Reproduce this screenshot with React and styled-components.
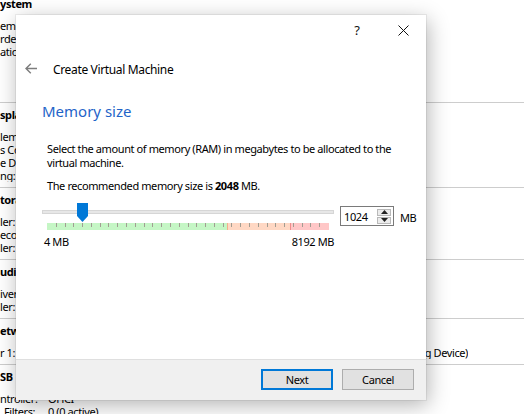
import React from "react";
import styled, { createGlobalStyle } from "styled-components";

const Global = createGlobalStyle`
  html, body { margin: 0; padding: 0; background: #ffffff; }
  body {
    width: 524px; height: 414px; overflow: hidden;
    font-family: "Segoe UI", "Noto Sans", sans-serif;
    font-size: 11px; letter-spacing: -0.4px; color: #000;
  }
`;

const Screen = styled.div`
  position: relative;
  width: 524px;
  height: 414px;
  overflow: hidden;
  background: #fff;
`;

/* ---------- background details pane ---------- */
const Details = styled.div`
  display: flex;
  flex-direction: column;
  margin-top: -9px;
`;

const Section = styled.section`
  border-top: 1px solid #cdcdcd;
  padding: 5px 0 ${(p) => 5 + (p.$extra || 0)}px;
`;

const SectionTitle = styled.div`
  font-weight: 700;
  line-height: 14px;
  white-space: nowrap;
  max-width: ${(p) => (p.$full ? 60 : 16)}px;
  overflow: hidden;
`;

const Rows = styled.div`
  margin-top: 8px;
  display: flex;
  flex-direction: column;
`;

const Row = styled.div`
  display: grid;
  grid-template-columns: 48px auto;
  height: 13px;
  line-height: 13px;
  white-space: nowrap;
`;

const Label = styled.span`
  padding-left: ${(p) => p.$indent || 0}px;
  max-width: ${(p) => (p.$full ? 48 : 16)}px;
  overflow: hidden;
`;

const Value = styled.span`
  ${(p) => (p.$width ? `width: ${p.$width}px; text-align: right; overflow: hidden;` : "")}
`;

const sections = [
  { title: "ystem", full: true, extra: 39, rows: [{ l: "emory:" }, { l: "rder:" }, { l: "ation:" }] },
  { title: "splay", rows: [{ l: "lemory:" }, { l: "s Controller:" }, { l: "e Desktop Server:" }, { l: "ng:" }] },
  { title: "torage", rows: [{ l: "ler:" }, { l: "econdary Master:" }, { l: "ler:" }] },
  { title: "udio", rows: [{ l: "iver:" }, { l: "ler:" }] },
  { title: "etwork", rows: [{ l: "r 1:", v: "Pointing Device)", w: 420 }] },
  { title: "SB", rows: [{ l: "ntroller:", v: "OHCI", full: true }, { l: "Filters:", v: "0 (0 active)", full: true, indent: 4 }] },
];

/* ---------- dialog ---------- */
const Dialog = styled.div`
  position: absolute;
  left: 16px;
  top: 15px;
  width: 410px;
  height: 385px;
  background: #fff;
  display: flex;
  flex-direction: column;
  box-shadow: 0 0 0 1px rgba(0, 0, 0, 0.06), 2px 5px 20px rgba(0, 0, 0, 0.3);
`;

const TitleBar = styled.div`
  height: 30px;
  display: flex;
  justify-content: flex-end;
`;

const CaptionButton = styled.div`
  width: 46px;
  height: 30px;
  display: flex;
  align-items: center;
  justify-content: center;
  font-size: 13px;
  letter-spacing: 0;
  color: #111;
`;

const Header = styled.div`
  height: 46px;
  display: flex;
  align-items: center;
  gap: 16px;
  padding-left: 9px;
`;

const HeaderText = styled.span`
  font-size: 12px;
  letter-spacing: -0.35px;
  padding-top: 3px;
`;

const Body = styled.div`
  padding: 10px 0 0 26px;
  display: flex;
  flex-direction: column;
`;

const PageTitle = styled.h1`
  margin: 0;
  font-weight: 400;
  font-size: 15px;
  letter-spacing: 0;
  line-height: 20px;
  color: #1f64c8;
`;

const Text = styled.p`
  margin: ${(p) => p.$top || 0}px 0 0 5px;
  line-height: 14px;
  width: 360px;
`;

const SliderBlock = styled.div`
  margin-top: 9px;
  display: flex;
  align-items: flex-start;
`;

const SliderColumn = styled.div`
  width: 292px;
  display: flex;
  flex-direction: column;
`;

const Track = styled.div`
  position: relative;
  height: 21px;
`;

const Groove = styled.div`
  margin-top: 8px;
  height: 4px;
  box-sizing: border-box;
  background: #e7e7e7;
  border: 1px solid #d6d6d6;
`;

const Handle = styled.svg`
  position: absolute;
  top: 1px;
  width: 11px;
  height: 19px;
`;

const Scale = styled.div`
  position: relative;
  margin: 0 5px;
  height: 7px;
  display: flex;
`;

const Zone = styled.div`
  height: 100%;
  background: ${(p) => p.$bg};
  border-left: ${(p) => (p.$edge ? `1px solid ${p.$edge}` : "none")};
  box-sizing: border-box;
`;

const Ticks = styled.div`
  position: absolute;
  inset: 0 0 auto 0;
  height: 4px;
  display: flex;
  justify-content: space-between;
`;

const Tick = styled.span`
  width: 1px;
  height: 4px;
  background: #a19d92;
  visibility: ${(p) => (p.$hidden ? "hidden" : "visible")};
`;

const ScaleLabels = styled.div`
  margin-top: 5px;
  display: flex;
  justify-content: space-between;
  line-height: 14px;
  padding: 0 0 0 2px;
`;

const SpinBox = styled.div`
  margin: 4px 0 0 6px;
  width: 54px;
  height: 20px;
  box-sizing: border-box;
  border: 1px solid #7a7a7a;
  display: flex;
  align-items: center;
  justify-content: space-between;
  padding: 0 2px 0 3px;
`;

const SpinArrows = styled.div`
  display: flex;
  flex-direction: column;
  gap: 1px;
`;

const SpinArrow = styled.div`
  width: 14px;
  height: 7px;
  box-sizing: border-box;
  background: #ececec;
  border: 1px solid #b9b9b9;
  display: flex;
  align-items: center;
  justify-content: center;
`;

const Unit = styled.span`
  margin: 8px 0 0 6px;
`;

const Footer = styled.div`
  margin-top: auto;
  height: 41px;
  box-sizing: border-box;
  border-top: 1px solid #dfdfdf;
  background: #f0f0f0;
  display: flex;
  justify-content: flex-end;
  align-items: flex-start;
  gap: 9px;
  padding: 9px 12px 0 0;
`;

const Button = styled.button`
  width: 72px;
  height: 21px;
  box-sizing: border-box;
  background: #e1e1e1;
  border: ${(p) => (p.$primary ? "2px solid #0078d7" : "1px solid #adadad")};
  font: inherit;
  letter-spacing: inherit;
  color: #000;
  padding: 0;
`;

const zones = [
  { w: 63.8, bg: "#c5f6c5" },
  { w: 22.4, bg: "#ffd8c4", edge: "#f4b08c" },
  { w: 13.8, bg: "#ffc7c7", edge: "#f08c8c" },
];

const Arrow = ({ up }) => (
  <svg width="7" height="4" viewBox="0 0 7 4">
    <path d={up ? "M0 4 L3.5 0 L7 4 Z" : "M0 0 L3.5 4 L7 0 Z"} fill="#222" />
  </svg>
);

export default function App() {
  const value = 1024;
  const max = 8192;
  const handleLeft = 5 + (282 * value) / max - 5.5;
  return (
    <Screen>
      <Global />
      <Details>
        {sections.map((s) => (
          <Section key={s.title} $extra={s.extra}>
            <SectionTitle $full={s.full}>{s.title}</SectionTitle>
            <Rows>
              {s.rows.map((r, i) => (
                <Row key={i}>
                  <Label $indent={r.indent} $full={r.full}>{r.l}</Label>
                  {r.v && <Value $width={r.w}>{r.v}</Value>}
                </Row>
              ))}
            </Rows>
          </Section>
        ))}
      </Details>

      <Dialog>
        <TitleBar>
          <CaptionButton>?</CaptionButton>
          <CaptionButton>
            <svg width="11" height="11" viewBox="0 0 11 11">
              <path d="M0.5 0.5 L10.5 10.5 M10.5 0.5 L0.5 10.5" stroke="#111" strokeWidth="1" />
            </svg>
          </CaptionButton>
        </TitleBar>
        <Header>
          <svg width="12" height="11" viewBox="0 0 12 11">
            <path d="M12 5.5 H1.2 M5.8 0.8 L1 5.5 L5.8 10.2" stroke="#7d7d7d" strokeWidth="1.4" fill="none" />
          </svg>
          <HeaderText>Create Virtual Machine</HeaderText>
        </Header>
        <Body>
          <PageTitle>Memory size</PageTitle>
          <Text $top={21}>
            Select the amount of memory (RAM) in megabytes to be allocated to the virtual machine.
          </Text>
          <Text $top={9}>
            The recommended memory size is <b>2048</b> MB.
          </Text>
          <SliderBlock>
            <SliderColumn>
              <Track>
                <Groove />
                <Handle viewBox="0 0 11 19" style={{ left: handleLeft }}>
                  <path d="M0 0 H11 V13 L5.5 19 L0 13 Z" fill="#0078d7" />
                </Handle>
              </Track>
              <Scale>
                {zones.map((z, i) => (
                  <Zone key={i} $bg={z.bg} $edge={z.edge} style={{ width: `${z.w}%` }} />
                ))}
                <Ticks>
                  {Array.from({ length: 33 }, (_, i) => (
                    <Tick key={i} $hidden={i === 0 || i === 32} />
                  ))}
                </Ticks>
              </Scale>
              <ScaleLabels>
                <span>4 MB</span>
                <span>8192 MB</span>
              </ScaleLabels>
            </SliderColumn>
            <SpinBox>
              <span>1024</span>
              <SpinArrows>
                <SpinArrow><Arrow up /></SpinArrow>
                <SpinArrow><Arrow /></SpinArrow>
              </SpinArrows>
            </SpinBox>
            <Unit>MB</Unit>
          </SliderBlock>
        </Body>
        <Footer>
          <Button $primary>Next</Button>
          <Button>Cancel</Button>
        </Footer>
      </Dialog>
    </Screen>
  );
}
